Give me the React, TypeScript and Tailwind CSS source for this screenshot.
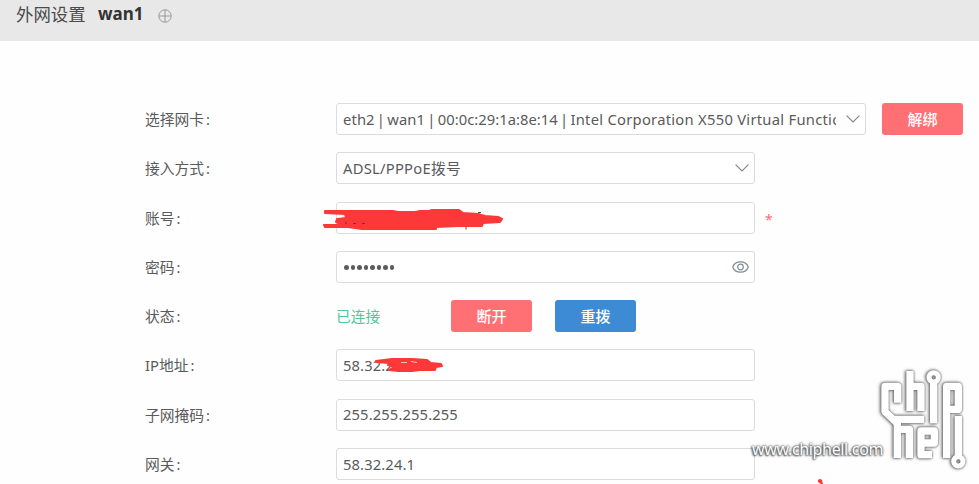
import type { ReactNode } from "react";

function Row({ label, children }: { label: string; children: ReactNode }) {
  return (
    <div className="flex h-[49.25px] items-start">
      <div className="h-8 w-[191px] shrink-0 pt-[1px] text-[14.75px] leading-[31px]">
        {label}
        <span className="ml-[2px]">:</span>
      </div>
      {children}
    </div>
  );
}

function Field({ wide = false, children }: { wide?: boolean; children?: ReactNode }) {
  return (
    <div
      className={`relative flex h-8 items-center justify-between rounded-[3px] border border-[#dcdcdc] bg-white pr-[5px] pl-[6px] tracking-[0.12px] ${
        wide ? "w-[530px]" : "w-[419px]"
      }`}
    >
      {children}
    </div>
  );
}

function Chevron() {
  return (
    <svg className="shrink-0" width="14" height="8" viewBox="0 0 14 8" fill="none" stroke="#888" strokeWidth="1.2">
      <path d="M.6.6 7 7 13.4.6" />
    </svg>
  );
}

function Pipe() {
  return <span className="-mx-[1.8px] whitespace-pre"> | </span>;
}

function Button({ tone, className = "", children }: { tone: "red" | "blue"; className?: string; children: ReactNode }) {
  return (
    <button
      className={`h-8 w-[81px] shrink-0 rounded-[3px] text-[15px] leading-[33px] font-medium text-white ${
        tone === "red" ? "bg-[#ff7074]" : "bg-[#3d8bd5]"
      } ${className}`}
    >
      {children}
    </button>
  );
}

function Logo() {
  return (
    <svg
      className="absolute top-[362px] left-[870px] overflow-visible [filter:drop-shadow(0_0_1px_#666)_drop-shadow(-1px_0.5px_1.5px_#777)]"
      width="109"
      height="115"
      viewBox="0 0 327 345"
      fill="none"
      stroke="#fff"
      strokeWidth="22"
      strokeLinejoin="round"
    >
      <path d="M83 122V73H45V149L82 184V288M68 172H163M82 202H118V288" />
      <path d="M120 27V147M120 73H153V147" />
      <path d="M191 60V184" />
      <circle cx="191" cy="46" r="14" strokeWidth="15" />
      <path d="M230 288V73H265V142H238" />
      <path d="M265 162V286" />
      <circle cx="265" cy="298" r="14" strokeWidth="15" />
      <path d="M186 278H153V207H193V243H160" />
    </svg>
  );
}

export default function App() {
  return (
    <div className="relative h-[484px] w-[979px] overflow-hidden bg-[#fefefe] font-['Noto_Sans','Noto_Sans_CJK_SC',sans-serif] text-[#5a5a5a]">
      <header className="flex h-[41px] items-start bg-[#e8e8e8] pl-4 leading-[28px]">
        <h1 className="w-[82px] text-[17.4px] text-[#4a4a4a]">外网设置</h1>
        <span className="w-[60px] text-[17px] font-bold text-[#333]">wan1</span>
        <svg className="mt-[9px]" width="14" height="14" viewBox="0 0 14 14" fill="none" stroke="#999">
          <circle cx="7" cy="7" r="6.2" />
          <path d="M7 1v12M1 7h12" />
        </svg>
      </header>
      <main className="pt-[62px] pl-[145px] text-[14.75px]">
        <Row label="选择网卡">
          <Field wide>
            <span className="w-[493px] overflow-hidden whitespace-nowrap">
              eth2
              <Pipe />
              wan1
              <Pipe />
              <span className="tracking-[0.04px]">00:0c:29:1a:8e:14</span>
              <Pipe />
              <span className="tracking-[0.27px]">Intel Corporation X550 Virtual Function</span>
            </span>
            <Chevron />
          </Field>
          <Button tone="red" className="ml-4">解绑</Button>
        </Row>
        <Row label="接入方式">
          <Field>
            <span className="tracking-[0.25px]">ADSL/PPPoE拨号</span>
            <Chevron />
          </Field>
        </Row>
        <Row label="账号">
          <Field>
            <svg className="absolute top-[5px] left-[-15px]" width="182" height="22" viewBox="0 0 182 22" fill="none">
              <path
                d="M3 3H71L76 4H93L98 3H107L110 2H137L141 5 156 6 163 8 176 9 180 11 178 14 161 15 160 18H136L114 19V21H40L26 19H3L2 17H19L14 14 15 11 24 10 23 6 3 5Z"
                fill="#fd3838" stroke="#fd3838" strokeWidth="2" strokeLinejoin="round"
              />
              <path d="M24 14v2M31 15.500h3M40 15.500h3M156 4.500h3M144 19v2.500" stroke="#663838" strokeWidth="1" />
            </svg>
          </Field>
          <span className="ml-[10px] text-[14px] leading-[35px] text-[#ff7074]">*</span>
        </Row>
        <Row label="密码">
          <Field>
            <span className="flex gap-[2px] pt-px pl-px">
              {Array.from({ length: 8 }, (_, i) => (
                <i key={i} className="size-[4.5px] rounded-full bg-[#5c5c5c]" />
              ))}
            </span>
            <svg className="mr-[0.5px] shrink-0" width="17" height="12" viewBox="0 0 17 12" fill="none" stroke="#808b96" strokeWidth="1.2">
              <path d="M.7 6C3-.8 14-.8 16.3 6 14 12.8 3 12.8.7 6Z" />
              <circle cx="8.5" cy="6" r="2.8" />
            </svg>
          </Field>
        </Row>
        <Row label="状态">
          <span className="w-[115px] leading-[33px] text-[#4fc798]">已连接</span>
          <Button tone="red">断开</Button>
          <Button tone="blue" className="ml-[23px]">重拨</Button>
        </Row>
        <Row label="IP地址">
          <Field>
            <span>58.32.23</span>
            <svg className="absolute top-[7px] left-[37px]" width="70" height="16" viewBox="0 0 70 16" fill="none">
              <path
                d="M2 4 18 2 38 2 53 3 57 6 67 7 68 9 62 10 61 13H46L38 14H24L15 13 21 10 14 8 15 6 2 5Z"
                fill="#fd3838" stroke="#fd3838" strokeWidth="2" strokeLinejoin="round"
              />
              <path d="M27 5.500h6M37 4.500l6 1" stroke="#fff" strokeWidth=".7" />
            </svg>
          </Field>
        </Row>
        <Row label="子网掩码">
          <Field>255.255.255.255</Field>
        </Row>
        <Row label="网关">
          <Field>58.32.24.1</Field>
        </Row>
      </main>
      <div className="absolute top-[438px] left-[752px] text-[16px] leading-[22px] tracking-[-0.35px] whitespace-nowrap text-white [text-shadow:0_0_2px_#444,-1px_1px_2px_#555,0_0_3px_#666]">
        www.chiphell.com
      </div>
      <Logo />
      <svg className="absolute top-[478px] left-[817px]" width="7" height="6" viewBox="0 0 7 6">
        <path d="M1 2Q3 0 5 2L6 6H4L1 4Z" fill="#fd3838" />
      </svg>
    </div>
  );
}
